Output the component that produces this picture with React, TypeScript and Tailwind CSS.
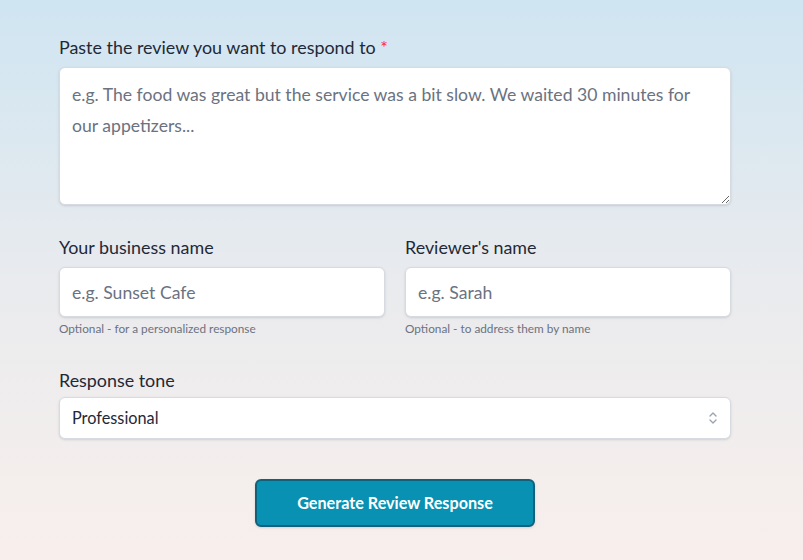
import { useState } from 'react';

export default function App() {
    const [review, setReview] = useState('');
    const [business, setBusiness] = useState('');
    const [reviewer, setReviewer] = useState('');
    const [tone, setTone] = useState('professional');

    return (
        <div
            className="min-h-[560px] w-full bg-gradient-to-b from-[#cfe5f2] via-[#e9ebee] to-[#f8efec] font-['Lato','Noto_Sans',sans-serif] text-[#1f2937]"
        >
            <form className="ml-[59px] flex w-[672px] flex-col pt-[36px]" onSubmit={(e) => e.preventDefault()}>
                <label className="mb-[9px] text-[17.9px] leading-[22px]">
                    Paste the review you want to respond to <span className="text-red-500">*</span>
                </label>
                <textarea
                    value={review}
                    onChange={(e) => setReview(e.target.value)}
                    placeholder="e.g. The food was great but the service was a bit slow. We waited 30 minutes for our appetizers..."
                    className="h-[138px] w-full rounded-md border border-[#d6dbe1] bg-white px-[12px] pb-[13px] pt-[11px] text-[17.6px] leading-[31px] shadow-sm outline-none placeholder:text-[#6b7280]"
                />

                <div className="mt-[31px] grid grid-cols-2 gap-x-[20px]">
                    <div className="flex flex-col">
                        <label className="mb-[9px] text-[17.9px] leading-[22px]">Your business name</label>
                        <input
                            value={business}
                            onChange={(e) => setBusiness(e.target.value)}
                            placeholder="e.g. Sunset Cafe"
                            className="h-[50px] w-full rounded-md border border-[#d6dbe1] bg-white px-[12px] text-[17.6px] shadow-sm outline-none placeholder:text-[#6b7280]"
                        />
                        <p className="mt-[4px] text-[11.8px] leading-[15px] text-[#6b7280]">Optional - for a personalized response</p>
                    </div>
                    <div className="flex flex-col">
                        <label className="mb-[9px] text-[17.9px] leading-[22px]">Reviewer's name</label>
                        <input
                            value={reviewer}
                            onChange={(e) => setReviewer(e.target.value)}
                            placeholder="e.g. Sarah"
                            className="h-[50px] w-full rounded-md border border-[#d6dbe1] bg-white px-[12px] text-[17.6px] shadow-sm outline-none placeholder:text-[#6b7280]"
                        />
                        <p className="mt-[4px] text-[11.8px] leading-[15px] text-[#6b7280]">Optional - to address them by name</p>
                    </div>
                </div>

                <label className="mb-[6px] mt-[33px] text-[17.9px] leading-[22px]">Response tone</label>
                <div className="relative">
                    <select
                        value={tone}
                        onChange={(e) => setTone(e.target.value)}
                        className="h-[42px] w-full appearance-none rounded-md border border-[#d6dbe1] bg-white px-[12px] text-[16.3px] text-[#1f2937] shadow-sm outline-none"
                    >
                        <option value="professional">Professional</option>
                        <option value="friendly">Friendly</option>
                        <option value="apologetic">Apologetic</option>
                    </select>
                    <svg
                        className="pointer-events-none absolute right-[13px] top-1/2 h-[16px] w-[10px] -translate-y-1/2 text-[#9ca3af]"
                        viewBox="0 0 10 16"
                        fill="none"
                        stroke="currentColor"
                        strokeWidth="1.4"
                        strokeLinecap="round"
                        strokeLinejoin="round"
                    >
                        <path d="M2 6l3-3 3 3" />
                        <path d="M2 10l3 3 3-3" />
                    </svg>
                </div>

                <div className="mt-[40px] flex justify-center">
                    <button
                        type="submit"
                        className="h-[48px] w-[280px] rounded-md border-2 border-[#12617a] bg-[#0891b2] text-[16.2px] font-bold text-white shadow-sm"
                    >
                        Generate Review Response
                    </button>
                </div>
            </form>
        </div>
    );
}
